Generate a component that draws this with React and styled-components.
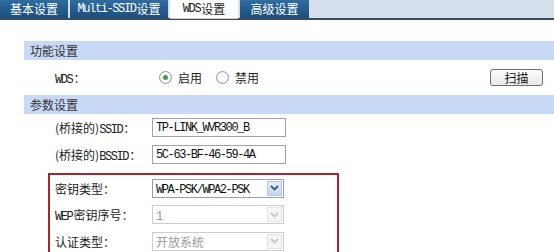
import React from "react";
import styled, { createGlobalStyle } from "styled-components";

const Global = createGlobalStyle`
  html, body { margin: 0; padding: 0; background: #fff; }
  body { font-family: "Noto Sans CJK SC", "Liberation Sans", sans-serif; font-size: 12px; color: #222; overflow: hidden; }
`;

const Page = styled.div`
  width: 554px;
  height: 252px;
  overflow: hidden;
  display: flex;
  flex-direction: column;
`;

const TabBar = styled.div`
  display: flex;
  height: 18px;
  background: #d6e0ec;
  border-bottom: 2px solid #3c4a5a;
`;

const Tab = styled.div`
  width: ${(p) => p.w}px;
  margin-right: 2px;
  display: flex;
  align-items: center;
  justify-content: center;
  font-size: 12px;
  line-height: 18px;
  color: ${(p) => (p.active ? "#222" : "#fff")};
  background: ${(p) =>
    p.active ? "#fff" : "linear-gradient(#2f6d9e, #1c4e7c)"};
  ${(p) => p.active && "border-bottom: 1px solid #c8c8c8; margin-bottom: -1px;"}
`;

const Mono = styled.span`
  font-family: "Liberation Mono", "DejaVu Sans Mono", monospace;
  font-size: 12px;
  letter-spacing: -1.4px;
  margin-right: 1px;
`;

const Content = styled.div`
  padding: 21px 0 0 24px;
  display: flex;
  flex-direction: column;
`;

const SectionHeader = styled.div`
  height: 19px;
  background: #c7d9f6;
  padding-left: 6px;
  display: flex;
  align-items: center;
  font-size: 12px;
  color: #333;
`;

const Row = styled.div`
  display: flex;
  align-items: center;
  height: ${(p) => p.h || 27}px;
  padding-left: ${(p) => p.pl ?? 31}px;
`;

const Label = styled.div`
  width: ${(p) => p.w || 97}px;
  flex-shrink: 0;
  font-size: 12px;
  color: #222;
  white-space: nowrap;
`;

const RadioGroup = styled.div`
  display: flex;
  align-items: center;
  gap: 6px;
  padding-left: 7px;
  flex: 1;
`;

const RadioDot = styled.span`
  width: 11px;
  height: 11px;
  border-radius: 50%;
  border: 1px solid #8a9aa8;
  background: radial-gradient(circle, #fff 40%, #e6e9ec 100%);
  display: inline-flex;
  align-items: center;
  justify-content: center;
  &::after {
    content: "";
    width: 5px;
    height: 5px;
    border-radius: 50%;
    background: ${(p) => (p.checked ? "#3fa04a" : "transparent")};
  }
`;

const RadioText = styled.span`
  font-size: 12px;
  margin-right: 8px;
`;

const Button = styled.button`
  margin-left: auto;
  margin-right: 11px;
  width: 53px;
  height: 17px;
  padding: 0;
  border: 1px solid #6d6d6d;
  border-radius: 3px;
  background: linear-gradient(#fdfdfd, #e8e8e8);
  font-family: "Noto Sans CJK SC", sans-serif;
  font-size: 12px;
  line-height: 15px;
  color: #111;
`;

const Input = styled.div`
  width: 129px;
  height: 17px;
  border: 1px solid #9aa4ac;
  display: flex;
  align-items: center;
  padding-left: 3px;
  color: #111;
  box-sizing: content-box;
`;

const Highlight = styled.div`
  margin: 5px 0 0 24px;
  width: 287px;
  border: 2px solid #a7262d;
  border-bottom: none;
  display: flex;
  flex-direction: column;
`;

const Select = styled.div`
  width: 127px;
  height: 17px;
  border: 1px solid ${(p) => (p.disabled ? "#c9ced3" : "#8fa1b3")};
  display: flex;
  align-items: center;
  color: ${(p) => (p.disabled ? "#9a9a9a" : "#111")};
  padding-left: 3px;
  font-size: 12px;
`;

const SelectText = styled.div`
  flex: 1;
  white-space: nowrap;
`;

const Arrow = styled.div`
  width: 15px;
  height: 15px;
  margin-right: 1px;
  display: flex;
  align-items: center;
  justify-content: center;
  background: ${(p) => (p.disabled ? "#f4f5f6" : "linear-gradient(#e4ecf8, #c6d6ef)")};
  border: 1px solid ${(p) => (p.disabled ? "#e2e4e6" : "#b4c6e2")};
  box-sizing: border-box;
`;

const ArrowIcon = ({ disabled }) => (
  <svg width="9" height="6" viewBox="0 0 9 6">
    <path
      d="M1 1 L4.5 4.5 L8 1"
      fill="none"
      stroke={disabled ? "#c4c8cc" : "#3a5a8c"}
      strokeWidth="1.8"
    />
  </svg>
);

const SelectBox = ({ disabled, children }) => (
  <Select disabled={disabled}>
    <SelectText>{children}</SelectText>
    <Arrow disabled={disabled}>
      <ArrowIcon disabled={disabled} />
    </Arrow>
  </Select>
);

export default function App() {
  return (
    <Page>
      <Global />
      <TabBar>
        <Tab w={68}>基本设置</Tab>
        <Tab w={98}>
          <Mono>Multi-SSID</Mono>设置
        </Tab>
        <Tab w={68} active>
          <Mono>WDS</Mono>设置
        </Tab>
        <Tab w={69}>高级设置</Tab>
      </TabBar>
      <Content>
        <SectionHeader>功能设置</SectionHeader>
        <Row h={35}>
          <Label>
            <Mono>WDS</Mono>：
          </Label>
          <RadioGroup>
            <RadioDot checked />
            <RadioText>启用</RadioText>
            <RadioDot />
            <RadioText>禁用</RadioText>
            <Button>扫描</Button>
          </RadioGroup>
        </Row>
        <SectionHeader>参数设置</SectionHeader>
        <Row>
          <Label>
            (桥接的)<Mono>SSID</Mono>：
          </Label>
          <Input>
            <Mono>TP-LINK_WVR300_B</Mono>
          </Input>
        </Row>
        <Row>
          <Label>
            (桥接的)<Mono>BSSID</Mono>：
          </Label>
          <Input>
            <Mono>5C-63-BF-46-59-4A</Mono>
          </Input>
        </Row>
        <Highlight>
          <Row h={26} pl={5}>
            <Label>密钥类型：</Label>
            <SelectBox>
              <Mono>WPA-PSK/WPA2-PSK</Mono>
            </SelectBox>
          </Row>
          <Row h={27} pl={5}>
            <Label>
              <Mono>WEP</Mono>密钥序号：
            </Label>
            <SelectBox disabled>
              <Mono>1</Mono>
            </SelectBox>
          </Row>
          <Row h={26} pl={5}>
            <Label>认证类型：</Label>
            <SelectBox disabled>开放系统</SelectBox>
          </Row>
        </Highlight>
      </Content>
    </Page>
  );
}
